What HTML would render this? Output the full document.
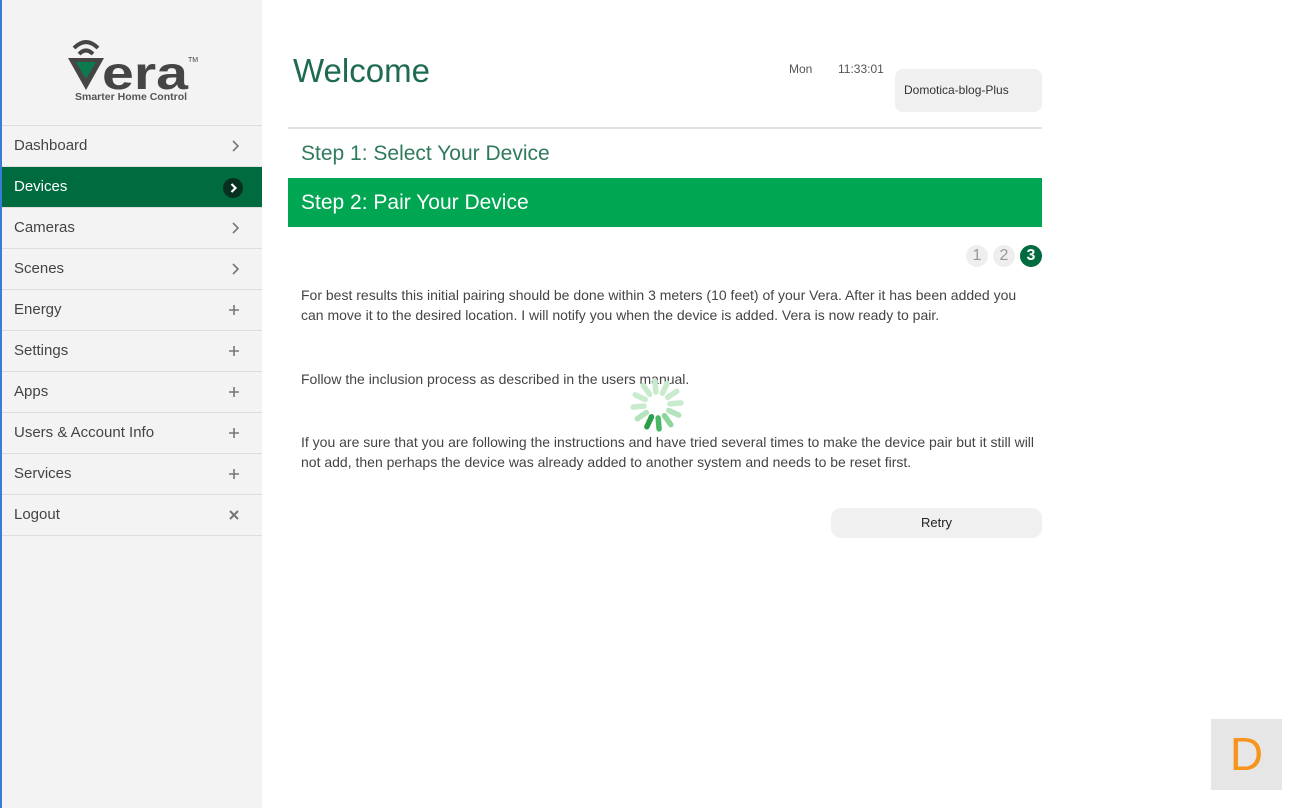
<!DOCTYPE html>
<html><head><meta charset="utf-8"><style>
*{margin:0;padding:0;box-sizing:border-box}
body{width:1300px;height:808px;background:#fff;font-family:"Liberation Sans",sans-serif;position:relative;overflow:hidden;color:#444}
.side{position:absolute;left:0;top:0;width:262px;height:808px;background:#f3f3f3;border-left:2px solid #3a7bd5}
.logo{position:absolute;left:64px;top:36px}
.nav{position:absolute;top:125px;left:0;width:260px;border-top:1px solid #ddd}
.nav div{height:41px;border-bottom:1px solid #ddd;padding-left:12px;line-height:40px;font-size:15px;color:#444;position:relative}
.nav div svg{position:absolute;right:22px;top:14px}
.nav .act{background:#006b3f;color:#fff}
.nav .act i{position:absolute;right:19px;top:11px;width:20px;height:20px;border-radius:50%;background:#08301f}
.nav .act i svg{right:5px;top:5px}
h1{position:absolute;left:293px;top:52px;font-weight:normal;font-size:33px;color:#1f6b4f}
.time{position:absolute;top:62px;font-size:12px;color:#555}
.acct{position:absolute;left:895px;top:69px;width:147px;height:43px;background:#f0f0f0;border-radius:8px;font-size:12px;line-height:43px;padding-left:9px;color:#333}
.hr{position:absolute;left:288px;top:127px;width:754px;height:2px;background:#e3e3e3}
.s1{position:absolute;left:301px;top:142px;font-size:21px;color:#2f7a5a}
.s2{position:absolute;left:288px;top:178px;width:754px;height:49px;background:#00a651;color:#fff;font-size:21px;line-height:49px;padding-left:13px}
.c{position:absolute;width:22px;height:22px;border-radius:50%;top:245px;text-align:center;line-height:22px;font-size:16px;background:#eee;color:#999}
p{position:absolute;left:301px;font-size:14px;line-height:20px;color:#444;width:738px}
.retry{position:absolute;left:831px;top:508px;width:211px;height:30px;background:#f0f0f0;border-radius:10px;text-align:center;line-height:30px;font-size:13px;color:#222}
.d{position:absolute;left:1211px;top:719px;width:71px;height:71px;background:#e6e6e6;color:#f7941d;font-size:46px;text-align:center;line-height:71px}
</style></head><body>
<div class="side">
<div class="logo"><svg width="136" height="70" viewBox="0 0 136 70">
<path d="M8 12 Q20 0 32 12" stroke="#454545" stroke-width="4" fill="none"/>
<path d="M13 18 Q20 11 27 18" stroke="#454545" stroke-width="4" fill="none"/>
<path d="M2 22 L38 22 L20 54 Z" fill="#454545"/><path d="M10 26 L30 26 L20 43 Z" fill="#0b7a4f"/>
<text x="36" y="53" font-family="Liberation Sans" font-size="46" font-weight="bold" fill="#454545" textLength="86" lengthAdjust="spacingAndGlyphs">era</text>
<text x="122" y="26" font-size="7" fill="#454545">TM</text>
<text x="9" y="64" font-size="10.5" font-weight="bold" fill="#555">Smarter Home Control</text></svg></div>
<div class="nav">
<div>Dashboard<svg width="8" height="12"><path d="M1 1l5 5-5 5" stroke="#777" stroke-width="1.6" fill="none"/></svg></div>
<div class="act">Devices<i><svg width="8" height="10"><path d="M1.5 1l4 4-4 4" stroke="#fff" stroke-width="2.2" fill="none"/></svg></i></div>
<div>Cameras<svg width="8" height="12"><path d="M1 1l5 5-5 5" stroke="#777" stroke-width="1.6" fill="none"/></svg></div>
<div>Scenes<svg width="8" height="12"><path d="M1 1l5 5-5 5" stroke="#777" stroke-width="1.6" fill="none"/></svg></div>
<div>Energy<svg width="12" height="12"><path d="M6 1v10M1 6h10" stroke="#777" stroke-width="1.6"/></svg></div>
<div>Settings<svg width="12" height="12"><path d="M6 1v10M1 6h10" stroke="#777" stroke-width="1.6"/></svg></div>
<div>Apps<svg width="12" height="12"><path d="M6 1v10M1 6h10" stroke="#777" stroke-width="1.6"/></svg></div>
<div>Users &amp; Account Info<svg width="12" height="12"><path d="M6 1v10M1 6h10" stroke="#777" stroke-width="1.6"/></svg></div>
<div>Services<svg width="12" height="12"><path d="M6 1v10M1 6h10" stroke="#777" stroke-width="1.6"/></svg></div>
<div>Logout<svg width="12" height="12"><path d="M2 2l8 8M10 2l-8 8" stroke="#777" stroke-width="2"/></svg></div>
</div></div>
<h1>Welcome</h1>
<div class="time" style="left:789px">Mon</div><div class="time" style="left:838px">11:33:01</div>
<div class="acct">Domotica-blog-Plus</div>
<div class="hr"></div>
<div class="s1">Step 1: Select Your Device</div>
<div class="s2">Step 2: Pair Your Device</div>
<div class="c" style="left:966px">1</div><div class="c" style="left:993px">2</div>
<div class="c" style="left:1020px;background:#006b3f;color:#fff;font-weight:bold">3</div>
<p style="top:285px">For best results this initial pairing should be done within 3 meters (10 feet) of your Vera. After it has been added you can move it to the desired location. I will notify you when the device is added. Vera is now ready to pair.</p>
<p style="top:369px">Follow the inclusion process as described in the users manual.</p>
<p style="top:432px">If you are sure that you are following the instructions and have tried several times to make the device pair but it still will not add, then perhaps the device was already added to another system and needs to be reset first.</p>
<svg style="position:absolute;left:627px;top:375px" width="60" height="60" viewBox="-30 -30 60 60">
<g stroke-width="5.5" stroke-linecap="round">
<line x1="0" y1="13" x2="0" y2="24" stroke="#2e9e4a" transform="rotate(25)"/>
<line x1="0" y1="13" x2="0" y2="24" stroke="#4cb866" transform="rotate(-5)"/>
<line x1="0" y1="13" x2="0" y2="24" stroke="#8fd69d" transform="rotate(-35)"/>
<line x1="0" y1="13" x2="0" y2="24" stroke="#b5e3bd" transform="rotate(-65)"/>
<line x1="0" y1="13" x2="0" y2="24" stroke="#c8ebce" transform="rotate(-95)"/>
<line x1="0" y1="13" x2="0" y2="24" stroke="#c8ebce" transform="rotate(-125)"/>
<line x1="0" y1="13" x2="0" y2="24" stroke="#c8ebce" transform="rotate(-155)"/>
<line x1="0" y1="13" x2="0" y2="24" stroke="#c8ebce" transform="rotate(175)"/>
<line x1="0" y1="13" x2="0" y2="24" stroke="#c8ebce" transform="rotate(145)"/>
<line x1="0" y1="13" x2="0" y2="24" stroke="#c8ebce" transform="rotate(115)"/>
<line x1="0" y1="13" x2="0" y2="24" stroke="#c8ebce" transform="rotate(85)"/>
<line x1="0" y1="13" x2="0" y2="24" stroke="#b5e3bd" transform="rotate(55)"/>
</g></svg>
<div class="retry">Retry</div>
<div class="d">D</div>
</body></html>
